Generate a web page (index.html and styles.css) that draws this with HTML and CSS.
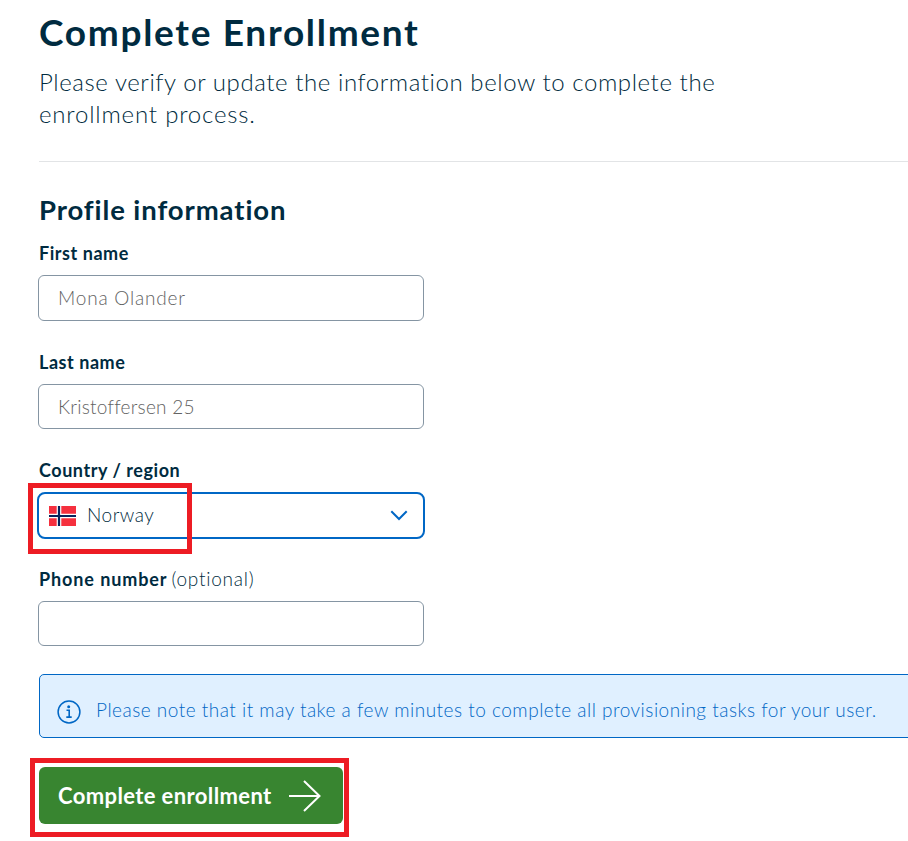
FILE: index.html
```html
<!DOCTYPE html>
<html lang="en">
<head>
<meta charset="utf-8">
<title>Complete Enrollment</title>
<link rel="stylesheet" href="styles.css">
</head>
<body>
<main class="page">
  <header class="intro">
    <h1 class="title">Complete Enrollment</h1>
    <p class="lead"><span class="lead-a">Please verify or update the information below to complete the</span><br><span class="lead-b">enrollment process.</span></p>
  </header>
  <form class="form">
    <h2 class="section-title">Profile information</h2>
    <div class="field">
      <label class="label">First name</label>
      <div class="input"><span class="v-first">Mona Olander</span></div>
    </div>
    <div class="field field-last">
      <label class="label">Last name</label>
      <div class="input input-short"><span class="v-last">Kristoffersen 25</span></div>
    </div>
    <div class="field">
      <label class="label">Country / region</label>
      <div class="select">
        <svg class="flag" viewBox="0 0 27 20" width="27" height="20">
          <rect width="27" height="20" fill="#f5303e"/>
          <path d="M10 0V20M0 10H27" stroke="#fff" stroke-width="4.6"/>
          <path d="M10 0V20M0 10H27" stroke="#06245c" stroke-width="2.2"/>
        </svg>
        <span class="country">Norway</span>
        <svg class="chevron" viewBox="0 0 18 11" width="18" height="11"><path d="M1.3 1.3L9 9L16.7 1.3" fill="none" stroke="#0067c5" stroke-width="2"/></svg>
      </div>
      <div class="mark mark-country"></div>
    </div>
    <div class="field field-phone">
      <label class="label"><span class="l-phone">Phone number</span> <span class="optional">(optional)</span></label>
      <div class="input input-short"></div>
    </div>
    <div class="notice">
      <svg class="info" viewBox="0 0 24 24" width="24" height="24" fill="none" stroke="#0067c5">
        <circle cx="12" cy="12" r="10.9" stroke-width="1.5"/>
        <circle cx="11.7" cy="6.7" r="1.5" fill="#0067c5" stroke="none"/>
        <path d="M9.5 10.3H12.2V17M9.3 17.1H14.7" stroke-width="1.6"/>
      </svg>
      <span class="notice-text">Please note that it may take a few minutes to complete all provisioning tasks for your user.</span>
    </div>
    <div class="actions">
      <button type="button" class="submit">
        <span class="submit-text">Complete enrollment</span>
        <svg class="arrow" viewBox="0 0 32 32" width="32" height="32" fill="none" stroke="#fff" stroke-width="2"><path d="M0 16H30.5M15 1L30.5 16L15 31"/></svg>
      </button>
      <div class="mark mark-submit"></div>
    </div>
  </form>
</main>
</body>
</html>
```
FILE: styles.css
```css
* { box-sizing: border-box; }
body {
  margin: 0;
  height: 841px;
  overflow: hidden;
  background: #fff;
  color: #002b40;
  font-family: Lato, "Liberation Sans", sans-serif;
}
.page { padding-left: 38px; }
.intro {
  height: 162px;
  margin-left: 1px;
  padding-top: 8px;
  border-bottom: 1px solid #e2e4e6;
}
h1, h2, p { margin: 0; }
.title { font-size: 37px; line-height: 48px; font-weight: 700; letter-spacing: 1.7px; white-space: nowrap; }
.lead { margin-top: 10px; font-size: 24px; line-height: 32px; font-weight: 300; letter-spacing: .58px; white-space: nowrap; }
.lead-b { letter-spacing: .82px; }
.section-title { margin: 30px 0 0 1px; font-size: 27.5px; line-height: 36px; font-weight: 700; letter-spacing: .9px; }
.form { display: flex; flex-direction: column; align-items: flex-start; }
.field { position: relative; width: 386px; height: 109px; padding-top: 12px; }
.field-last { height: 108px; }
.label { display: block; height: 35px; padding-left: 1px; font-size: 18px; line-height: 26px; font-weight: 700; letter-spacing: .55px; white-space: nowrap; }
.l-phone { letter-spacing: .9px; }
.optional { margin-left: -1px; font-size: 19px; font-weight: 300; letter-spacing: .75px; }
.input {
  height: 46px;
  border: 1px solid #8595a3;
  border-radius: 6px;
  padding-left: 19px;
  font-size: 19px;
  line-height: 43px;
  font-weight: 300;
  color: #626262;
}
.input-short { height: 45px; }
.v-first { letter-spacing: .8px; }
.v-last { letter-spacing: .25px; }
.select {
  display: flex;
  align-items: center;
  width: 388px;
  height: 47px;
  margin-left: -1px;
  padding: 0 15px 0 10px;
  border: 2px solid #0067c5;
  border-radius: 8px;
}
.flag { margin-right: 11px; }
.country { margin-top: -3px; font-size: 19px; font-weight: 300; letter-spacing: .5px; }
.chevron { margin-left: auto; }
.mark { position: absolute; border: 5px solid #ed1c24; }
.mark-country { left: -10px; top: 38px; width: 164px; height: 71px; }
.notice {
  display: flex;
  align-items: center;
  width: 880px;
  height: 64px;
  margin: 11px 0 0 1px;
  padding: 8px 0 0 17px;
  border: 1px solid #0067c5;
  border-radius: 5px;
  background: #e0f0ff;
  color: #0067c5;
  white-space: nowrap;
}
.info { margin: 4px 15px 0 0; }
.notice-text { margin-top: -2px; font-size: 19px; font-weight: 300; letter-spacing: .5px; }
.actions { position: relative; margin: 29px 0 0 1px; }
.submit {
  display: flex;
  align-items: center;
  width: 304px;
  height: 57px;
  padding: 0 0 0 19px;
  border: 0;
  border-radius: 6px;
  background: #388530;
  color: #fff;
  font: 700 22px/30px Lato, sans-serif;
}
.submit-text { width: 231px; letter-spacing: .38px; text-align: left; white-space: nowrap; }
.mark-submit { left: -9px; top: -9px; width: 319px; height: 79px; }
```
